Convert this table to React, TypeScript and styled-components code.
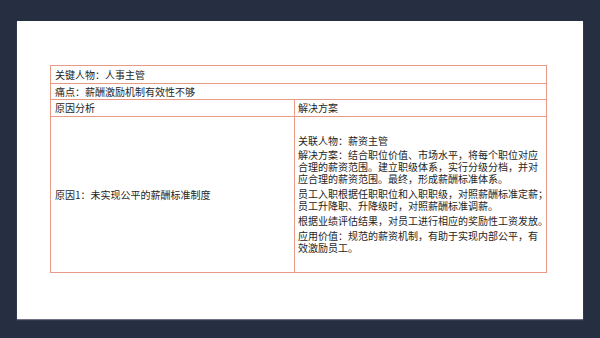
import styled, { createGlobalStyle } from "styled-components";

const GlobalStyle = createGlobalStyle`
  html, body {
    margin: 0;
    padding: 0;
    background: #262e42;
  }
  body {
    font-family: "Noto Sans CJK SC", "Noto Sans", sans-serif;
  }
`;

const Page = styled.div`
  width: 600px;
  height: 338px;
  box-sizing: border-box;
  padding: 21px 17px 19px;
  background: #262e42;
`;

const Slide = styled.div`
  width: 566px;
  height: 298px;
  box-sizing: border-box;
  padding: 44px 0 0 33px;
  background: #ffffff;
  box-shadow: 0 1px 1px rgba(140, 140, 160, 0.7);
`;

const Table = styled.table`
  width: 496px;
  border-collapse: collapse;
  table-layout: fixed;
  font-size: 10px;
  color: #1e1e1e;
`;

const Cell = styled.td<{ $h?: number; $pad?: number }>`
  border: 1px solid #e99a86;
  height: ${(p) => p.$h ?? 16}px;
  padding: 0 0 0 ${(p) => p.$pad ?? 4}px;
  line-height: 12px;
  vertical-align: middle;
  white-space: nowrap;
`;

const Para = styled.p`
  margin: 0 0 3px;
  line-height: 12px;
  &:last-child {
    margin-bottom: 0;
  }
`;

export default function App() {
  return (
    <>
      <GlobalStyle />
      <Page>
        <Slide>
          <Table>
            <colgroup>
              <col style={{ width: 244 }} />
              <col style={{ width: 252 }} />
            </colgroup>
            <tbody>
              <tr>
                <Cell colSpan={2} $h={17}>关键人物：人事主管</Cell>
              </tr>
              <tr>
                <Cell colSpan={2} $h={15}>痛点：薪酬激励机制有效性不够</Cell>
              </tr>
              <tr>
                <Cell $h={16}>原因分析</Cell>
                <Cell $h={16} $pad={3}>解决方案</Cell>
              </tr>
              <tr>
                <Cell $h={155}>原因1：未实现公平的薪酬标准制度</Cell>
                <Cell $h={155} $pad={3}>
                  <Para style={{ marginBottom: 2 }}>关联人物：薪资主管</Para>
                  <Para>
                    解决方案：结合职位价值、市场水平，将每个职位对应
                    <br />
                    合理的薪资范围。建立职级体系，实行分级分档，并对
                    <br />
                    应合理的薪资范围。最终，形成薪酬标准体系。
                  </Para>
                  <Para>
                    员工入职根据任职职位和入职职级，对照薪酬标准定薪；
                    <br />
                    员工升降职、升降级时，对照薪酬标准调薪。
                  </Para>
                  <Para>根据业绩评估结果，对员工进行相应的奖励性工资发放。</Para>
                  <Para>
                    应用价值：规范的薪资机制，有助于实现内部公平，有
                    <br />
                    效激励员工。
                  </Para>
                </Cell>
              </tr>
            </tbody>
          </Table>
        </Slide>
      </Page>
    </>
  );
}
